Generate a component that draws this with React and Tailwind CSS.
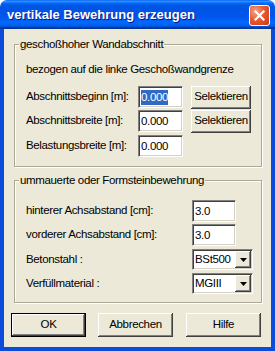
import React from "react";

const sunken =
  "border border-t-[#808080] border-l-[#808080] border-b-white border-r-white shadow-[inset_1px_1px_0_#404040,inset_-1px_-1px_0_#d4d0c8]";
const raised =
  "shadow-[inset_-1px_-1px_0_#404040,inset_1px_1px_0_#ffffff,inset_-2px_-2px_0_#808080,inset_2px_2px_0_#ECE9D8]";

const TextBox = ({ value, selected, className }) => (
  <div className={`flex items-center bg-white pl-[2px] ${sunken} ${className}`}>
    {selected ? (
      <span className="bg-[#316AC5] leading-[15px] text-white">{value}</span>
    ) : (
      <span className="leading-[15px]">{value}</span>
    )}
  </div>
);

const Combo = ({ value }) => (
  <div className={`flex h-[21px] w-[61px] items-stretch bg-white p-[1px] ${sunken}`}>
    <span className="flex flex-1 items-center pl-[1px] leading-[15px]">{value}</span>
    <div className={`flex w-[16px] items-center justify-center bg-[#ECE9D8] ${raised}`}>
      <svg width="7" height="4" viewBox="0 0 7 4">
        <path d="M0 0h7L3.5 4z" fill="#000" />
      </svg>
    </div>
  </div>
);

const Button = ({ children, className, isDefault }) => (
  <div
    className={`flex items-center justify-center bg-[#ECE9D8] ${
      isDefault
        ? "shadow-[inset_0_0_0_1px_#000,inset_-2px_-2px_0_#404040,inset_2px_2px_0_#ffffff,inset_-3px_-3px_0_#808080]"
        : raised
    } ${className}`}
  >
    {children}
  </div>
);

const Group = ({ title, children, className }) => (
  <div
    className={`relative ml-[10px] mr-[9px] h-[123px] border border-[#ACA899] shadow-[1px_1px_0_#ffffff,inset_1px_1px_0_#ffffff] ${className}`}
  >
    <span className="absolute left-[4px] top-[-9px] bg-[#ECE9D8] px-[1px] leading-[16px]">{title}</span>
    <div className="pl-[11px]">{children}</div>
  </div>
);

export default function App() {
  return (
    <div className="h-[351px] w-[275px] whitespace-nowrap bg-white text-[11.5px] tracking-[-0.35px] text-black font-['Liberation_Sans',sans-serif]">
      <div className="flex h-full flex-col overflow-hidden rounded-t-[7px]">
        <div className="flex h-[29px] shrink-0 items-start bg-[linear-gradient(to_bottom,#0058EE_0%,#3A93FF_4%,#288EFF_6%,#127DFF_8%,#036FFC_10%,#0262EE_14%,#0057E5_20%,#0054E3_24%,#0055EB_56%,#005BF5_66%,#026AFE_76%,#0062EF_86%,#0052D6_92%,#0040AB_94%,#003092_100%)]">
          <span className="ml-[7px] mt-[7px] text-[13px] font-bold leading-[16px] tracking-normal text-white [text-shadow:1px_1px_0_#0A1883]">
            vertikale Bewehrung erzeugen
          </span>
          <div className="ml-auto mr-[5px] mt-[5px] flex h-[21px] w-[21px] items-center justify-center rounded-[3px] border border-white bg-[radial-gradient(circle_at_30%_30%,#F5A58C_0%,#E45B33_45%,#CB3A15_100%)]">
            <svg width="11" height="11" viewBox="0 0 11 11">
              <path d="M1.5 1.5l8 8M9.5 1.5l-8 8" stroke="#fff" strokeWidth="2.2" strokeLinecap="square" />
            </svg>
          </div>
        </div>
        <div className="flex flex-1 flex-col border-x-4 border-b-4 border-[#0B4CDB] bg-[#ECE9D8]">
          <Group title="geschoßhoher Wandabschnitt" className="mt-[15px]">
            <div className="mt-[16px] leading-[16px]">bezogen auf die linke Geschoßwandgrenze</div>
            <div className="mt-[9px] flex h-[22px] items-center">
              <span className="w-[112px]">Abschnittsbeginn [m]:</span>
              <TextBox value="0.000" selected className="h-[22px] w-[45px]" />
              <Button className="ml-[8px] h-[23px] w-[60px]">Selektieren</Button>
            </div>
            <div className="mt-[2px] flex h-[22px] items-center">
              <span className="w-[112px]">Abschnittsbreite [m]:</span>
              <TextBox value="0.000" className="h-[22px] w-[45px]" />
              <Button className="ml-[8px] h-[23px] w-[60px]">Selektieren</Button>
            </div>
            <div className="mt-[3px] flex h-[22px] items-center">
              <span className="w-[112px]">Belastungsbreite [m]:</span>
              <TextBox value="0.000" className="h-[22px] w-[45px]" />
            </div>
          </Group>
          <Group title="ummauerte oder Formsteinbewehrung" className="mt-[13px]">
            <div className="mt-[19px] flex h-[22px] items-center">
              <span className="w-[166px]">hinterer Achsabstand [cm]:</span>
              <TextBox value="3.0" className="h-[22px] w-[44px]" />
            </div>
            <div className="mt-[2px] flex h-[22px] items-center">
              <span className="w-[166px]">vorderer Achsabstand [cm]:</span>
              <TextBox value="3.0" className="h-[22px] w-[44px]" />
            </div>
            <div className="mt-[3px] flex h-[21px] items-center">
              <span className="w-[166px]">Betonstahl :</span>
              <Combo value="BSt500" />
            </div>
            <div className="mt-[3px] flex h-[21px] items-center">
              <span className="w-[166px]">Verfüllmaterial :</span>
              <Combo value="MGIII" />
            </div>
          </Group>
          <div className="mt-[10px] flex">
            <Button isDefault className="ml-[7px] h-[24px] w-[75px]">OK</Button>
            <Button className="ml-[12px] h-[24px] w-[75px]">Abbrechen</Button>
            <Button className="ml-[13px] h-[24px] w-[75px]">Hilfe</Button>
          </div>
        </div>
      </div>
    </div>
  );
}
